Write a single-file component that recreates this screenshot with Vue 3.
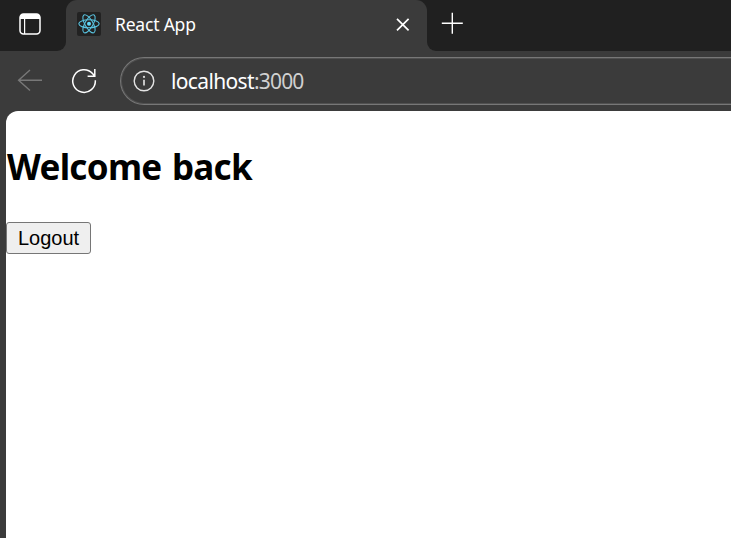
<script setup>
import { ref } from 'vue'

const title = ref('React App')
const host = ref('localhost')
const port = ref(':3000')
</script>

<template>
  <div class="browser">
    <header class="tab-strip">
      <div class="tab-actions">
        <svg width="24" height="24" viewBox="0 0 24 24" fill="none">
          <rect x="2" y="2" width="20" height="20" rx="3.5" stroke="#fff" stroke-width="1.5" />
          <path d="M2 7V6a4 4 0 0 1 4-4h12a4 4 0 0 1 4 4v1z" fill="#fff" />
          <path d="M6.6 7v15" stroke="#fff" stroke-width="1.2" />
        </svg>
      </div>
      <div class="tab-slot">
        <div class="tab">
          <svg class="favicon" width="24" height="24" viewBox="0 0 24 24" fill="none" stroke="#61dafb" stroke-width="1.1">
            <rect width="24" height="24" rx="2" fill="#222" stroke="none" />
            <g opacity=".88">
              <ellipse cx="12" cy="11.8" rx="10.2" ry="4" />
              <ellipse cx="12" cy="11.8" rx="10.2" ry="4" transform="rotate(60 12 11.8)" />
              <ellipse cx="12" cy="11.8" rx="10.2" ry="4" transform="rotate(120 12 11.8)" />
            </g>
            <circle cx="12" cy="11.8" r="2" fill="#61dafb" stroke="none" />
          </svg>
          <span class="tab-title">{{ title }}</span>
          <svg class="close" width="14" height="14" viewBox="0 0 14 14" stroke="#fff" stroke-width="1.7">
            <path d="M1 1.8l11.6 11.6M12.6 1.8L1 13.4" />
          </svg>
        </div>
      </div>
      <div class="strip-rest">
        <svg width="22" height="22" viewBox="0 0 22 22" stroke="#fff" stroke-width="1.4">
          <path d="M.8 11.3h21M11.3 .8v21" />
        </svg>
      </div>
    </header>

    <nav class="toolbar">
      <svg class="back" width="26" height="24" viewBox="0 0 26 24" fill="none" stroke="#787878" stroke-width="1.4">
        <path d="M25 11.3H1.6M13 1.1L1.6 11.3 13 21.6" />
      </svg>
      <svg class="reload" width="26" height="26" viewBox="0 0 26 26" fill="none" stroke="#fff" stroke-width="1.5">
        <path d="M24.3 12.2A11.3 11.3 0 1 1 21.5 5.6L23.6 8M23.8 1v7.2h-7.2" />
      </svg>
      <div class="address">
        <svg width="22" height="22" viewBox="0 0 22 22" fill="none">
          <circle cx="11" cy="11" r="9.8" stroke="#e4e4e4" stroke-width="1.4" />
          <path d="M11 9.8v5.8" stroke="#ddd" stroke-width="1.7" />
          <circle cx="11" cy="6.9" r="1.1" fill="#ddd" />
        </svg>
        <span class="url">{{ host }}<span class="port">{{ port }}</span></span>
      </div>
    </nav>

    <main class="page">
      <h2>Welcome back</h2>
      <button type="button">Logout</button>
    </main>
  </div>
</template>

<style>
body {
  margin: 0;
  overflow: hidden;
}
</style>

<style scoped>
.browser {
  display: flex;
  flex-direction: column;
  height: 100vh;
  overflow: hidden;
  background: #3b3b3b;
  font-family: "Noto Sans", "Open Sans", sans-serif;
}
svg {
  display: block;
  flex: none;
}
.tab-strip {
  display: flex;
  height: 51px;
  flex: none;
}
.tab-actions {
  box-sizing: border-box;
  width: 66px;
  padding: 12px 0 0 18px;
  background: #202020;
  border-radius: 0 0 9px 0;
}
.tab-slot {
  width: 361px;
  background: linear-gradient(#202020 50%, #3b3b3b 50%);
}
.tab {
  display: flex;
  align-items: center;
  box-sizing: border-box;
  height: 51px;
  padding: 0 17px 3px 11px;
  background: #3b3b3b;
  border-radius: 11px 11px 0 0;
}
.tab-title {
  flex: 1;
  margin-left: 14px;
  color: #fff;
  font-size: 17.5px;
  letter-spacing: -0.2px;
  line-height: 24px;
  white-space: nowrap;
}
.strip-rest {
  box-sizing: border-box;
  flex: 1;
  padding: 12px 0 0 14px;
  background: #202020;
  border-radius: 0 0 0 9px;
}
.toolbar {
  display: flex;
  align-items: center;
  box-sizing: border-box;
  height: 60px;
  padding-left: 17px;
  flex: none;
}
.reload {
  margin-left: 28px;
}
.address {
  display: flex;
  align-items: center;
  box-sizing: border-box;
  flex: 1;
  height: 48px;
  margin-left: 23px;
  margin-right: -2px;
  padding-left: 12px;
  border: 1px solid #777;
  border-right: 0;
  border-radius: 24px 0 0 24px;
  box-shadow: inset 0 0 0 1px #505050;
}
.url {
  margin-left: 16px;
  color: #fff;
  font-size: 21px;
  letter-spacing: -0.65px;
  line-height: 30px;
  white-space: nowrap;
}
.port {
  color: #d0d0d0;
  letter-spacing: -0.8px;
}
.page {
  flex: 1;
  margin-left: 6px;
  background: #fff;
  border-radius: 12px 0 0 0;
}
h2 {
  margin: 0;
  padding: 32px 0 0 1px;
  color: #000;
  font-size: 35px;
  font-weight: 700;
  letter-spacing: -0.7px;
  word-spacing: 2px;
  line-height: 48px;
  white-space: nowrap;
}
button {
  display: block;
  box-sizing: border-box;
  width: 85px;
  height: 32px;
  margin: 31px 0 0;
  padding: 0;
  border: 1px solid #767676;
  border-radius: 3px;
  background: #efefef;
  color: #000;
  font: 20px/30px "Liberation Sans", Arial, sans-serif;
}
</style>
